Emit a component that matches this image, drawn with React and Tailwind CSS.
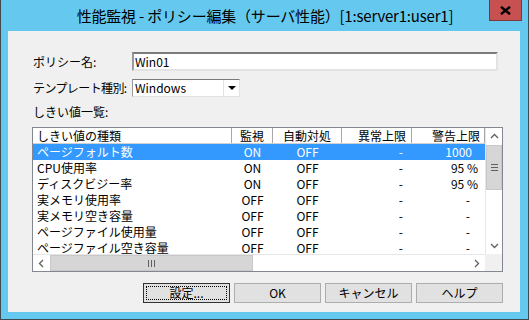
import React from "react";

const rows = [
  ["ページフォルト数", "ON", "OFF", "-", "1000", "pr-[13px]"],
  ["CPU使用率", "ON", "OFF", "-", "95 %", "pr-[7px]"],
  ["ディスクビジー率", "ON", "OFF", "-", "95 %", "pr-[7px]"],
  ["実メモリ使用率", "OFF", "OFF", "-", "-", "pr-[15px]"],
  ["実メモリ空き容量", "OFF", "OFF", "-", "-", "pr-[15px]"],
  ["ページファイル使用量", "OFF", "OFF", "-", "-", "pr-[15px]"],
  ["ページファイル空き容量", "OFF", "OFF", "-", "-", "pr-[15px]"],
];

function Chevron({ dir }) {
  const pts = {
    up: "1,6 4.5,2.5 8,6",
    down: "1,3 4.5,6.5 8,3",
    left: "6,1 2.5,4.5 6,8",
    right: "3,1 6.5,4.5 3,8",
  }[dir];
  return (
    <svg width="9" height="9" viewBox="0 0 9 9">
      <polyline points={pts} fill="none" stroke="#606060" strokeWidth="1.3" />
    </svg>
  );
}

function Button({ children, def }) {
  return (
    <div
      className={
        "relative w-[87px] h-[20px] flex items-center justify-center bg-[#e1e1e1] border text-[12px] text-black " +
        (def ? "border-[#333333]" : "border-[#adadad]")
      }
    >
      {def && (
        <span className="absolute inset-[2px] border border-dotted border-black"></span>
      )}
      <span className="relative leading-none">{children}</span>
    </div>
  );
}

export default function App() {
  return (
    <div className="w-[529px] h-[320px] bg-[#65c9ef] border-l border-r border-b border-[#3e4a50] flex flex-col font-['Noto_Sans_CJK_JP','Noto_Sans',sans-serif] overflow-hidden">
      <div className="relative h-[31px] flex items-center justify-center shrink-0">
        <span className="text-[15px] text-black leading-none pb-[1px] pl-[1px] tracking-[-0.2px]">
          性能監視 - ポリシー編集（サーバ性能）[1:server1:user1]
        </span>
        <div className="absolute right-[6px] top-0 w-[33px] h-[21px] bg-[#c75050] border border-[#7a3a3a] border-t-0 flex items-center justify-center">
          <svg width="11" height="9" viewBox="0 0 11 9">
            <path d="M1 0.8 L10 8.2 M10 0.8 L1 8.2" stroke="#000" strokeWidth="2.4" />
          </svg>
        </div>
      </div>

      <div className="mx-[7px] w-[512px] h-[281px] bg-[#f0f0f0] flex flex-col pl-[24px] pr-[17px] pt-[21px] text-[12px] text-black">
        <div className="flex items-center h-[19px]">
          <div className="w-[100px] pl-[1px] leading-none">ポリシー名:</div>
          <div className="w-[366px] h-[19px] bg-white border-2 border-t-[#7a7a7a] border-l-[#9a9a9a] border-b-[#e3e3e3] border-r-[#e3e3e3] flex items-center pl-[1px] leading-none">
            Win01
          </div>
        </div>

        <div className="flex items-center h-[18px] mt-[8px]">
          <div className="w-[100px] pl-[1px] leading-none tracking-[-0.6px] whitespace-nowrap">テンプレート種別:</div>
          <div className="w-[108px] h-[18px] bg-white border border-t-[#7a7a7a] border-l-[#9a9a9a] border-b-[#e3e3e3] border-r-[#e3e3e3] flex items-center">
            <span className="flex-1 pl-[2px] leading-none">Windows</span>
            <div className="w-[16px] h-[16px] flex items-center justify-center border-l border-[#e3e3e3] bg-white">
              <span className="w-0 h-0 border-l-[4px] border-r-[4px] border-t-[4px] border-l-transparent border-r-transparent border-t-black"></span>
            </div>
          </div>
        </div>

        <div className="mt-[8px] h-[14px] pl-[1px] leading-[14px]">しきい値一覧:</div>

        <div className="mt-[8px] w-[471px] h-[145px] border border-[#828790] bg-white flex flex-col">
          <div className="flex h-[126px]">
            <div className="w-[452px] flex flex-col overflow-hidden">
              <div className="flex h-[16px] shrink-0 border-b border-[#d0d0d0] bg-white leading-none">
                <div className="w-[199px] pl-[4px] border-r border-[#a8a8a8] flex items-center">しきい値の種類</div>
                <div className="w-[41px] border-r border-[#a8a8a8] flex items-center justify-center">監視</div>
                <div className="w-[69px] border-r border-[#a8a8a8] flex items-center justify-center">自動対処</div>
                <div className="w-[70px] pr-[5px] border-r border-[#a8a8a8] flex items-center justify-end">異常上限</div>
                <div className="w-[73px] pr-[4px] border-r border-[#a8a8a8] flex items-center justify-end">警告上限</div>
              </div>
              {rows.map((r, i) => (
                <div
                  key={i}
                  className={
                    "flex h-[16px] shrink-0 items-center leading-none " +
                    (i === 0 ? "bg-[#3399ff] text-white" : "text-black")
                  }
                >
                  <div className="w-[199px] pl-[4px]">{r[0]}</div>
                  <div className="w-[41px] text-center">{r[1]}</div>
                  <div className="w-[69px] text-center">{r[2]}</div>
                  <div className="w-[70px] text-right pr-[9px]">{r[3]}</div>
                  <div className={"w-[73px] text-right " + r[5]}>{r[4]}</div>
                </div>
              ))}
            </div>
            <div className="w-[17px] flex flex-col bg-white border-l border-[#e6e6e6]">
              <div className="h-[17px] flex items-center justify-center">
                <Chevron dir="up" />
              </div>
              <div className="h-[45px] bg-[#d6d6d6] border border-[#c8c8c8] flex flex-col items-center justify-center gap-[2px]">
                <span className="w-[7px] h-[1px] bg-[#606060]"></span>
                <span className="w-[7px] h-[1px] bg-[#606060]"></span>
                <span className="w-[7px] h-[1px] bg-[#606060]"></span>
              </div>
              <div className="flex-1"></div>
              <div className="h-[17px] flex items-center justify-center">
                <Chevron dir="down" />
              </div>
            </div>
          </div>
          <div className="flex h-[17px]">
            <div className="w-[452px] flex bg-white border-t border-[#e6e6e6]">
              <div className="w-[17px] flex items-center justify-center">
                <Chevron dir="left" />
              </div>
              <div className="w-[203px] bg-[#d6d6d6] border border-[#c8c8c8] flex items-center justify-center gap-[2px]">
                <span className="w-[1px] h-[7px] bg-[#606060]"></span>
                <span className="w-[1px] h-[7px] bg-[#606060]"></span>
                <span className="w-[1px] h-[7px] bg-[#606060]"></span>
              </div>
              <div className="flex-1"></div>
              <div className="w-[17px] flex items-center justify-center">
                <Chevron dir="right" />
              </div>
            </div>
            <div className="w-[17px] bg-[#f0f0f0]"></div>
          </div>
        </div>

        <div className="mt-[11px] flex justify-end gap-[4px]">
          <Button def>設定...</Button>
          <Button>OK</Button>
          <Button>キャンセル</Button>
          <Button>ヘルプ</Button>
        </div>
      </div>
    </div>
  );
}
